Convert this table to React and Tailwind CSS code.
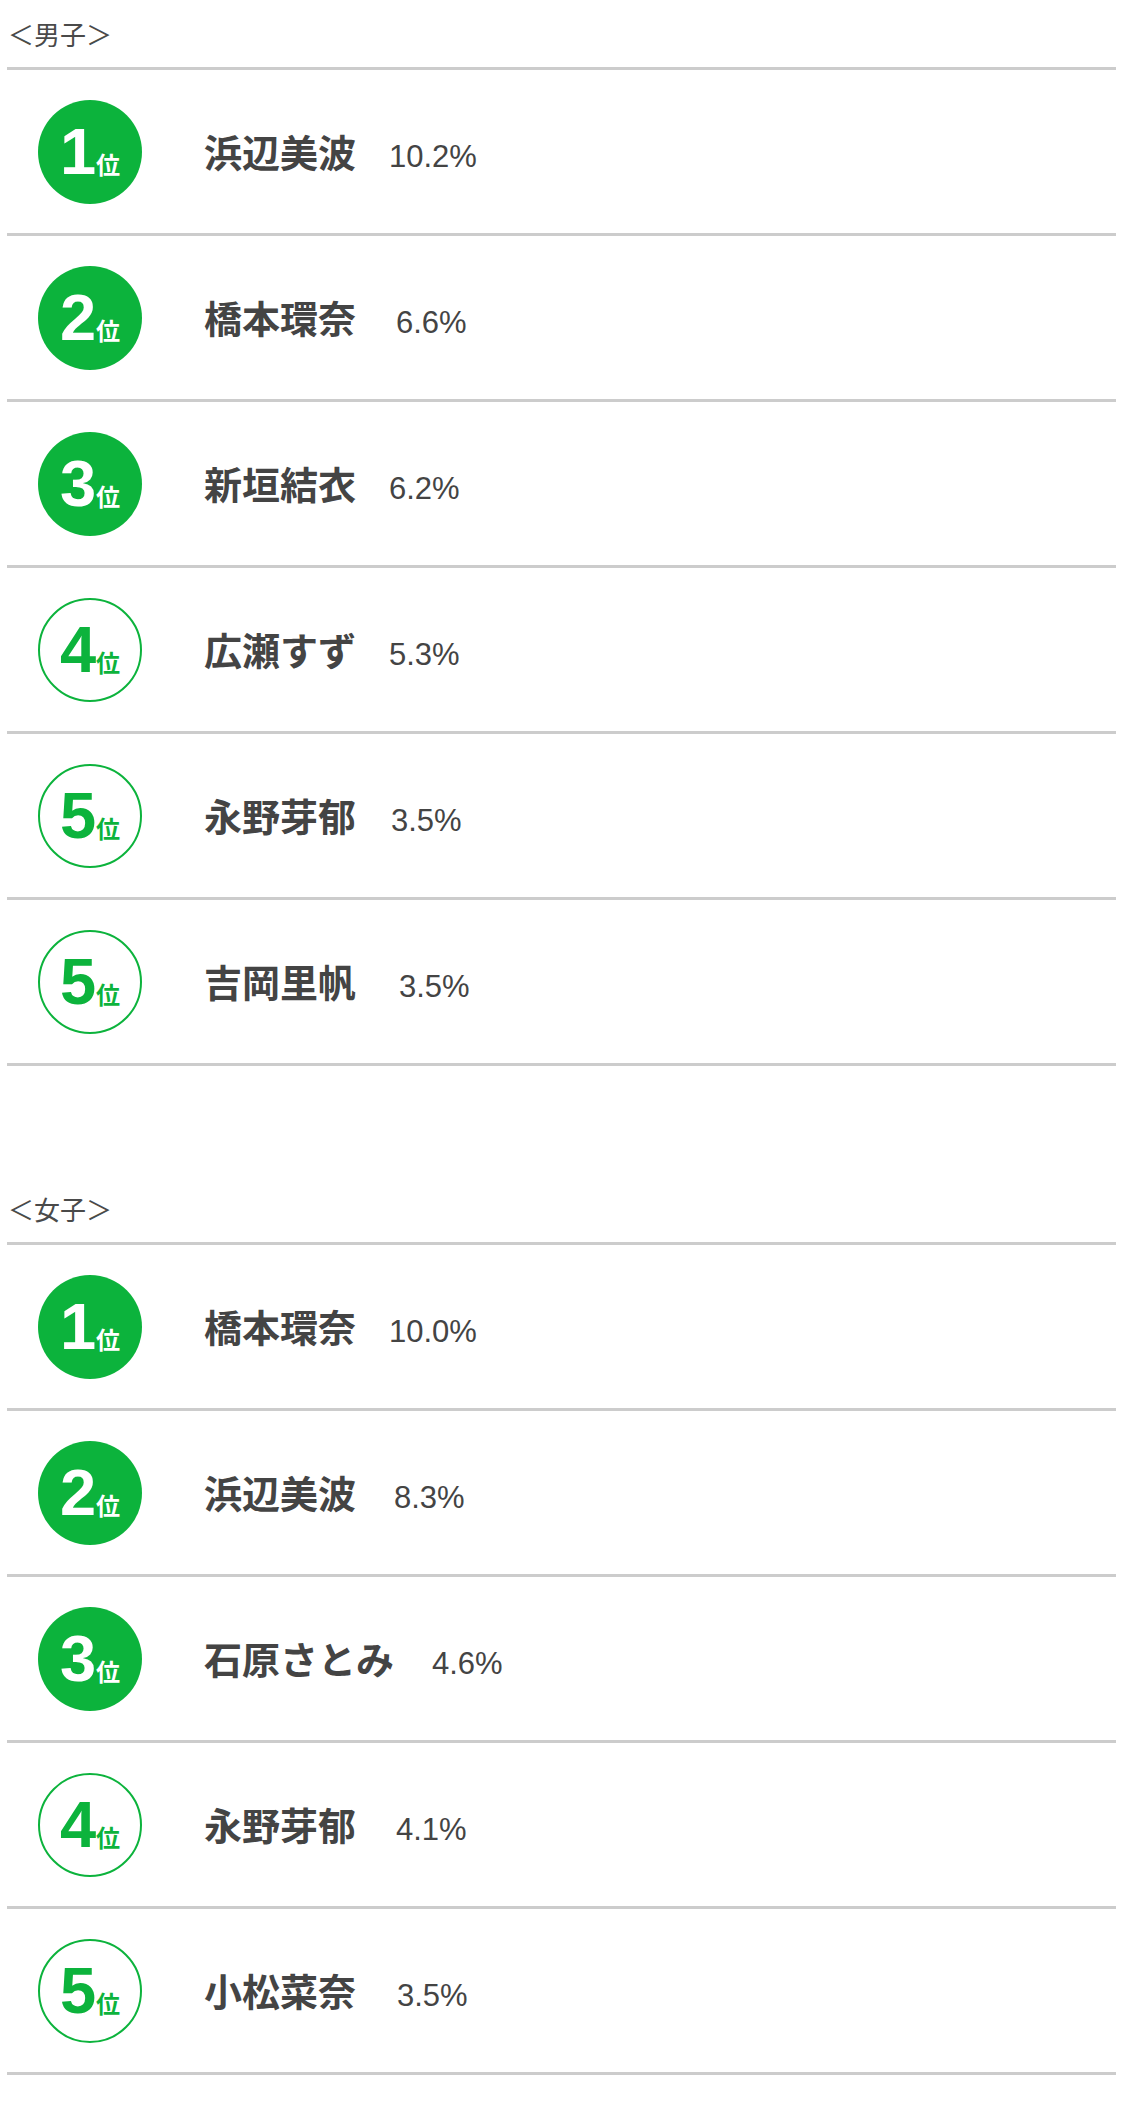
import React from 'react';

const male = [
  { rank: 1, name: '浜辺美波', pct: '10.2%', gap: 'ml-[33px]' },
  { rank: 2, name: '橋本環奈', pct: '6.6%', gap: 'ml-[40px]' },
  { rank: 3, name: '新垣結衣', pct: '6.2%', gap: 'ml-[33px]' },
  { rank: 4, name: '広瀬すず', pct: '5.3%', gap: 'ml-[33px]' },
  { rank: 5, name: '永野芽郁', pct: '3.5%', gap: 'ml-[35px]' },
  { rank: 5, name: '吉岡里帆', pct: '3.5%', gap: 'ml-[43px]' },
];

const female = [
  { rank: 1, name: '橋本環奈', pct: '10.0%', gap: 'ml-[33px]' },
  { rank: 2, name: '浜辺美波', pct: '8.3%', gap: 'ml-[38px]' },
  { rank: 3, name: '石原さとみ', pct: '4.6%', gap: 'ml-[38px]' },
  { rank: 4, name: '永野芽郁', pct: '4.1%', gap: 'ml-[40px]' },
  { rank: 5, name: '小松菜奈', pct: '3.5%', gap: 'ml-[41px]' },
];

// top three get a filled badge, the rest an outline
const RankBadge = ({ rank }) => {
  const filled = rank <= 3;
  return (
    <div
      className={
        filled
          ? 'w-[104px] h-[104px] rounded-full bg-[#0cb33c] text-white flex items-center justify-center shrink-0'
          : 'w-[104px] h-[104px] rounded-full border-2 border-[#0cb33c] text-[#0cb33c] flex items-center justify-center shrink-0'
      }
    >
      <span className="leading-none whitespace-nowrap">
        <span className="text-[65px] font-bold" style={{ fontFamily: '"Liberation Sans", Arial, sans-serif' }}>
          {rank}
        </span>
        <span className="text-[24px] font-bold">位</span>
      </span>
    </div>
  );
};

const RankRow = ({ item }) => (
  <div className="h-[166px] flex items-center pl-[31px] border-t-[3px] border-[#cccccc]">
    <RankBadge rank={item.rank} />
    <div className="ml-[62px] flex items-baseline text-[#444444]">
      <span className="text-[38px] font-bold leading-none">{item.name}</span>
      <span
        className={`${item.gap} text-[31px] leading-none`}
        style={{ fontFamily: '"Liberation Sans", Arial, sans-serif' }}
      >
        {item.pct}
      </span>
    </div>
  </div>
);

const Section = ({ title, items, className }) => (
  <section className={className}>
    <h2 className="pt-[21px] pb-[21px] pl-[1px] text-[26px] leading-[25px] font-normal text-[#4a4a4a]">{title}</h2>
    <div className="border-b-[3px] border-[#cccccc]">
      {items.map((item, i) => (
        <RankRow key={i} item={item} />
      ))}
    </div>
  </section>
);

export default function App() {
  return (
    <div
      className="w-[1122px] min-h-[2102px] bg-white pl-[7px] pr-[6px]"
      style={{ fontFamily: '"Noto Sans CJK JP", "Noto Sans", sans-serif' }}
    >
      <Section title="＜男子＞" items={male} />
      <Section title="＜女子＞" items={female} className="mt-[109px]" />
    </div>
  );
}
